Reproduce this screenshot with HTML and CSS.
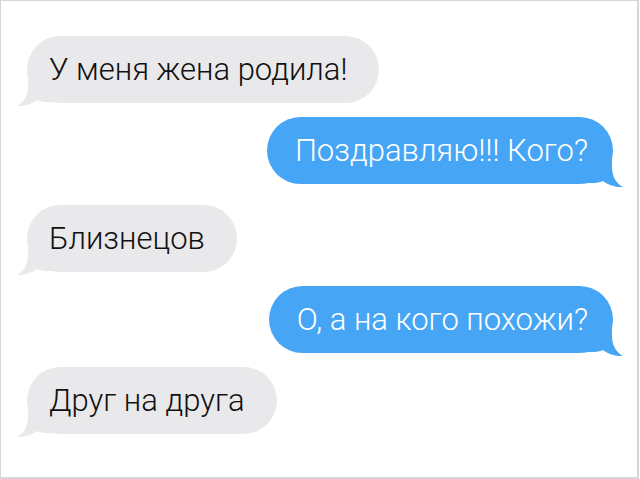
FILE: index.html
```html
<!DOCTYPE html>
<html lang="ru">
<head>
    <meta charset="UTF-8">
    <meta name="viewport" content="width=device-width, initial-scale=1.0">
    <title>Сообщения</title>
    <link rel="stylesheet" href="styles.css">
</head>
<body>

    <div class="frame">
        <!-- переписка -->
        <div class="chat">
            <div class="msg in first">
                <span class="bubble">У меня жена родила!
                    <svg class="tail" viewBox="0 0 44 37"><path d="M0 32 L0 0 H32 V16 C32 26 37 33 43 36 C36 36.5 28 34 23 30 C20 31.5 16 32 12 32 Z"/></svg>
                </span>
            </div>
            <div class="msg out">
                <span class="bubble">Поздравляю!!! Кого?
                    <svg class="tail" viewBox="0 0 44 37"><path d="M0 32 L0 0 H32 V16 C32 26 37 33 43 36 C36 36.5 28 34 23 30 C20 31.5 16 32 12 32 Z"/></svg>
                </span>
            </div>
            <div class="msg in gap-big">
                <span class="bubble">Близнецов
                    <svg class="tail" viewBox="0 0 44 37"><path d="M0 32 L0 0 H32 V16 C32 26 37 33 43 36 C36 36.5 28 34 23 30 C20 31.5 16 32 12 32 Z"/></svg>
                </span>
            </div>
            <div class="msg out">
                <span class="bubble">О, а на кого похожи?
                    <svg class="tail" viewBox="0 0 44 37"><path d="M0 32 L0 0 H32 V16 C32 26 37 33 43 36 C36 36.5 28 34 23 30 C20 31.5 16 32 12 32 Z"/></svg>
                </span>
            </div>
            <div class="msg in">
                <span class="bubble">Друг на друга
                    <svg class="tail" viewBox="0 0 44 37"><path d="M0 32 L0 0 H32 V16 C32 26 37 33 43 36 C36 36.5 28 34 23 30 C20 31.5 16 32 12 32 Z"/></svg>
                </span>
            </div>
        </div>
    </div>

</body>
</html>
```

FILE: styles.css
```css
/* страница */
body {
    margin: 0;
    padding: 0;
    background-color: #fff;
    font-family: Roboto, "Liberation Sans", sans-serif;
}

.frame {
    width: 636px;
    height: 476px;
    border: 1px solid #d6d6d6;
    border-right-width: 2px;
    border-bottom-width: 2px;
    overflow: hidden;
}

.chat {
    display: flex;
    flex-direction: column;
    padding: 35px 24px 0 26px;
}

.msg {
    display: flex;
    margin-top: 14px;
}

.msg.first {
    margin-top: 0;
}

.msg.gap-big {
    margin-top: 21px;
}

.msg.out {
    justify-content: flex-end;
}

.bubble {
    position: relative;
    z-index: 0;
    font-size: 31px;
    font-weight: 300;
    line-height: 37px;
    padding: 15px 32px 15px 22px;
    border-radius: 34px;
    white-space: nowrap;
}

.in .bubble {
    background-color: #e9e9eb;
    color: #111;
}

.out .bubble {
    background-color: #46a5f5;
    color: #fff;
    padding: 15px 25px 15px 28px;
}

/* хвостик пузыря */
.tail {
    position: absolute;
    z-index: -1;
    bottom: -4px;
    width: 44px;
    height: 37px;
}

.in .tail {
    left: -11px;
    transform: scaleX(-1);
    fill: #e9e9eb;
}

.out .tail {
    right: -11px;
    fill: #46a5f5;
}
```
